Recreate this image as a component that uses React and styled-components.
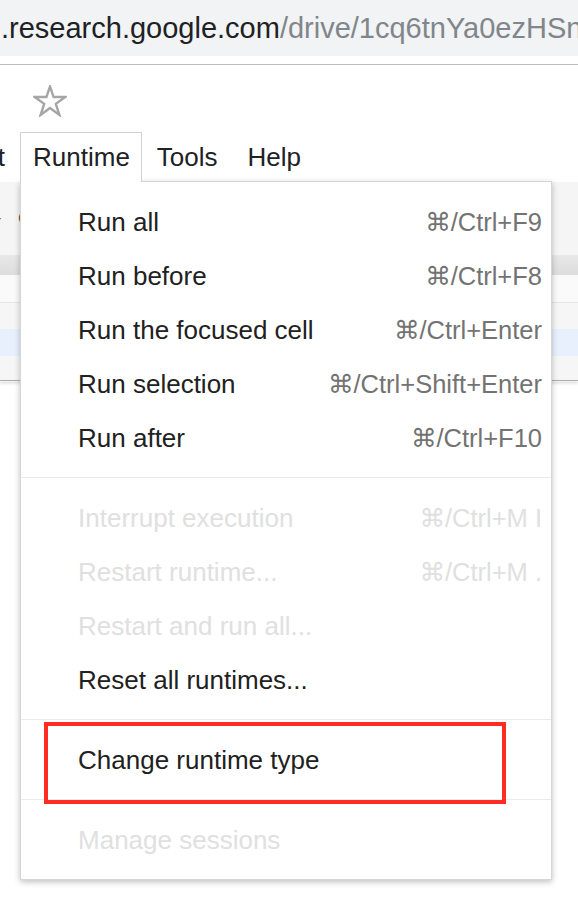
import React from "react";
import styled, { createGlobalStyle } from "styled-components";

const Global = createGlobalStyle`
  html, body { margin: 0; padding: 0; background: #fff; }
  body {
    font-family: "Liberation Sans", Arial, "DejaVu Sans", sans-serif;
    overflow: hidden;
  }
  * { box-sizing: border-box; }
`;

const Page = styled.div`
  width: 578px;
  height: 920px;
  overflow: hidden;
  background: #fff;
  position: relative;
`;

const UrlBar = styled.div`
  height: 56px;
  background: #f1f3f4;
  font-size: 29px;
  line-height: 56px;
  white-space: nowrap;
  overflow: hidden;
  padding-left: 1px;
`;

const UrlHost = styled.span`
  color: #202124;
`;

const UrlPath = styled.span`
  color: #80868b;
`;

const UrlDivider = styled.div`
  height: 9px;
  border-bottom: 1px solid #bdbdbd;
`;

const TitleRow = styled.div`
  height: 67px;
  display: flex;
  align-items: flex-start;
  padding: 20px 0 0 33px;
`;

const MenuBar = styled.div`
  height: 50px;
  display: flex;
  align-items: flex-start;
  margin-left: -75px;
  font-size: 26px;
  color: #202124;
  position: relative;
  z-index: 3;
`;

const MenuWrap = styled.div`
  position: relative;
`;

const MenuTab = styled.div`
  position: relative;
  z-index: 2;
  line-height: 47px;
  padding: ${(p) => (p.$open ? "1px 11px 1px 12px" : "1px 14px 1px 14px")};
  border: 1px solid ${(p) => (p.$open ? "#d2d2d2" : "transparent")};
  border-bottom: none;
  background: ${(p) => (p.$open ? "#fff" : "transparent")};
  white-space: nowrap;
`;

const Dropdown = styled.div`
  position: absolute;
  top: 49px;
  left: 0;
  width: 532px;
  z-index: 1;
  background: #fff;
  border: 1px solid #d6d6d6;
  box-shadow: 0 2px 6px rgba(0, 0, 0, 0.25);
  padding: 13px 0 12px;
`;

const Item = styled.div`
  position: relative;
  height: 54px;
  display: flex;
  align-items: center;
  justify-content: space-between;
  padding: 0 9px 0 57px;
  font-size: 26px;
  line-height: 54px;
  white-space: nowrap;
  color: ${(p) => (p.$disabled ? "#e0e0e0" : "#212121")};
`;

const Shortcut = styled.span`
  font-size: 25.5px;
  color: ${(p) => (p.$disabled ? "#e0e0e0" : "#737373")};
`;

const Separator = styled.div`
  height: 1px;
  background: #ebebeb;
  margin: 12px 0 13px;
`;

const Highlight = styled.div`
  position: absolute;
  top: -11px;
  left: 23px;
  width: 462px;
  height: 82px;
  border: 4px solid #ff2d21;
  pointer-events: none;
`;

const Toolbar = styled.div`
  background: #f5f5f5;
`;

const ToolRow = styled.div`
  height: 73px;
  display: flex;
  align-items: center;
  gap: 17px;
  margin-left: -8px;
  font-size: 16px;
  color: #444;
`;

const Band = styled.div`
  height: ${(p) => p.$h}px;
  background: ${(p) => p.$bg};
  border-bottom: ${(p) => (p.$line ? `1px solid ${p.$line}` : "none")};
`;

const HeaderEdge = styled.div`
  height: 1px;
  background: #b0b0b0;
  box-shadow: 0 2px 3px rgba(0, 0, 0, 0.3);
`;

const Star = () => (
  <svg width="34" height="32" viewBox="0 0 34 32">
    <polygon
      points="17,1.5 20.59,12.07 32.22,12.06 22.8,18.89 26.4,29.94 17,23.1 7.6,29.94 11.2,18.89 1.78,12.06 13.41,12.07"
      fill="none"
      stroke="#a6a6a6"
      strokeWidth="2.4"
      strokeLinejoin="miter"
    />
  </svg>
);

const sections = [
  [
    { label: "Run all", sc: "⌘/Ctrl+F9" },
    { label: "Run before", sc: "⌘/Ctrl+F8" },
    { label: "Run the focused cell", sc: "⌘/Ctrl+Enter" },
    { label: "Run selection", sc: "⌘/Ctrl+Shift+Enter" },
    { label: "Run after", sc: "⌘/Ctrl+F10" },
  ],
  [
    { label: "Interrupt execution", sc: "⌘/Ctrl+M I", disabled: true },
    { label: "Restart runtime...", sc: "⌘/Ctrl+M .", disabled: true },
    { label: "Restart and run all...", disabled: true },
    { label: "Reset all runtimes..." },
  ],
  [{ label: "Change runtime type", highlight: true }],
  [{ label: "Manage sessions", disabled: true }],
];

export default function App() {
  return (
    <Page>
      <Global />
      <UrlBar>
        <UrlHost>.research.google.com</UrlHost>
        <UrlPath>/drive/1cq6tnYa0ezHSn</UrlPath>
      </UrlBar>
      <UrlDivider />
      <TitleRow>
        <Star />
      </TitleRow>
      <MenuBar>
        <MenuTab>Insert</MenuTab>
        <MenuWrap>
          <MenuTab $open>Runtime</MenuTab>
          <Dropdown>
            {sections.map((sec, si) => (
              <React.Fragment key={si}>
                {si > 0 && <Separator />}
                {sec.map((it) => (
                  <Item key={it.label} $disabled={it.disabled}>
                    <span>{it.label}</span>
                    {it.sc && <Shortcut $disabled={it.disabled}>{it.sc}</Shortcut>}
                    {it.highlight && <Highlight />}
                  </Item>
                ))}
              </React.Fragment>
            ))}
          </Dropdown>
        </MenuWrap>
        <MenuTab>Tools</MenuTab>
        <MenuTab>Help</MenuTab>
      </MenuBar>
      <Toolbar>
        <ToolRow>
          <span>+</span>
          <span>Code</span>
        </ToolRow>
        <Band $h={20} $bg="linear-gradient(#e8e8e8, #dcdcdc)" />
        <Band $h={28} $bg="#fafafa" $line="#e6e6e6" />
        <Band $h={26} $bg="#f6f6f6" />
        <Band $h={27} $bg="#e8f0fe" />
        <Band $h={24} $bg="#f6f6f6" />
        <HeaderEdge />
      </Toolbar>
    </Page>
  );
}
